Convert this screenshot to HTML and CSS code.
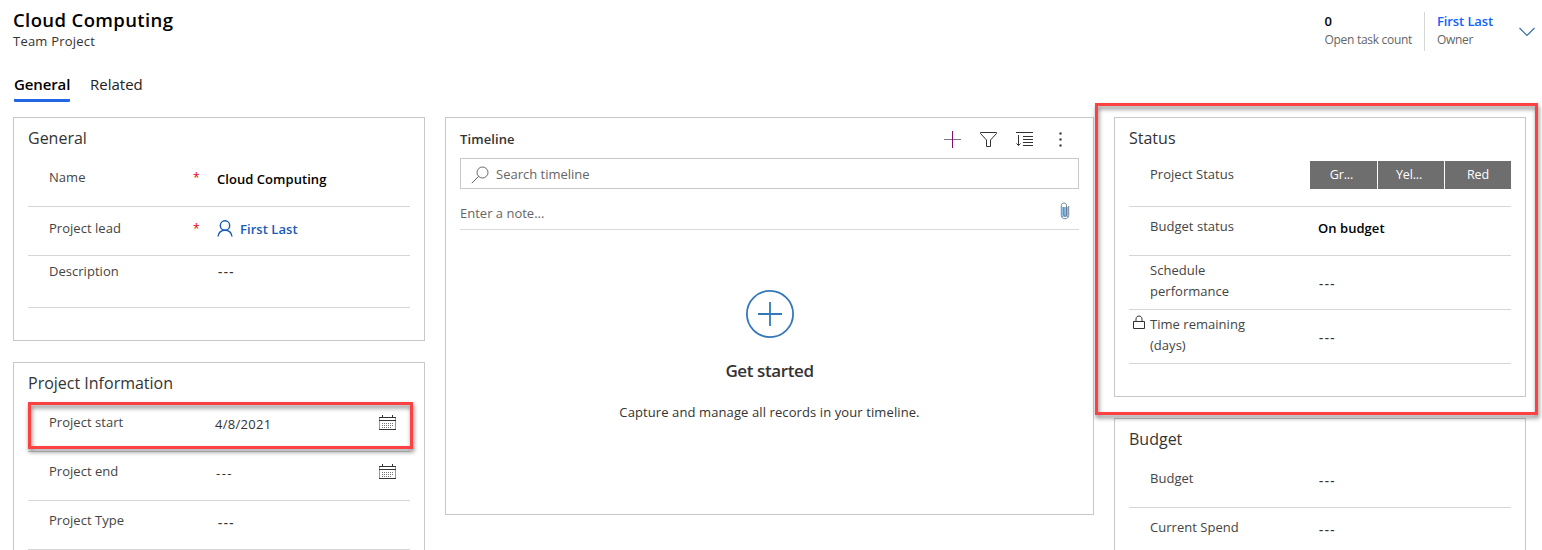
FILE: index.html
```html
<!DOCTYPE html>
<html lang="en">
<head>
<meta charset="utf-8">
<title>Cloud Computing - Team Project</title>
<link rel="stylesheet" href="styles.css">
</head>
<body>
<header class="header">
  <div class="identity">
    <h1 class="record-name"><span>Cloud Computing</span></h1>
    <div class="entity"><span>Team Project</span></div>
  </div>
  <div class="summary">
    <div class="fact"><b class="fact-value">0</b><span class="fact-label">Open task count</span></div>
    <div class="fact owner"><a class="fact-value link">First Last</a><span class="fact-label">Owner</span></div>
    <svg class="chevron" width="16" height="10" viewBox="0 0 16 10"><path d="M.5 1 8 8.500 15.500 1"/></svg>
  </div>
</header>
<nav class="tabs"><a class="tab active">General</a><a class="tab">Related</a></nav>
<main class="columns">
  <div class="column">
    <section class="panel general">
      <h2 class="title">General</h2>
      <div class="row first"><span class="label">Name</span><i class="req">*</i><b class="value">Cloud Computing</b></div>
      <div class="row lead"><span class="label">Project lead</span><i class="req">*</i><span class="value person"><svg width="16" height="17" viewBox="0 0 16 17"><circle cx="8" cy="5.500" r="4.700"/><path d="M1 16.500c.5-3.800 3.300-6.300 7-6.300s6.500 2.500 7 6.300"/></svg><b>First Last</b></span></div>
      <div class="row description"><span class="label">Description</span><b class="value dash">---</b></div>
    </section>
    <section class="panel info">
      <h2 class="title">Project Information</h2>
      <div class="row first"><span class="label">Project start</span><span class="value date">4/8/2021</span>
        <svg class="calendar" width="17" height="16" viewBox="0 0 17 16"><path d="M.5 2v12.500M16.500 2v12.500" class="cal-side"/><path d="M0 2.500h17M0 5.500h17M0 14.500h17M3.500 0v3M13.500 0v3"/><path class="cal-dots" d="M3 8.500h12M3 10.500h12M3 12.500h9"/></svg></div>
      <div class="row"><span class="label">Project end</span><span class="value date empty-date">---</span>
        <svg class="calendar" width="17" height="16" viewBox="0 0 17 16"><path d="M.5 2v12.500M16.500 2v12.500" class="cal-side"/><path d="M0 2.500h17M0 5.500h17M0 14.500h17M3.500 0v3M13.500 0v3"/><path class="cal-dots" d="M3 8.500h12M3 10.500h12M3 12.500h9"/></svg></div>
      <div class="row"><span class="label">Project Type</span><b class="value dash">---</b></div>
      <div class="callout callout-start"></div>
    </section>
  </div>
  <section class="panel timeline">
    <div class="timeline-head">
      <h2 class="timeline-title">Timeline</h2>
      <div class="tools">
        <svg width="17" height="17" viewBox="0 0 17 17"><path class="add-h" d="M0 8.500h17"/><path class="add-v" d="M8.500 0v17"/></svg>
        <svg width="17" height="17" viewBox="0 0 17 17"><path d="M.5 1.500h16v1L10.500 9v6.500h-4V9L.5 2.500z"/></svg>
        <svg width="17" height="17" viewBox="0 0 17 17"><path d="M0 1.500h17M7 5.500h10M7 8.500h10M7 11.500h10M7 14.500h10M2.500 4v10.500M.5 12.500l2 2 2-2"/></svg>
        <svg width="17" height="17" viewBox="0 0 17 17"><path class="more" d="M7.500 1.500h2v2h-2zM7.500 7.500h2v2h-2zM7.500 13.500h2v2h-2z"/></svg>
      </div>
    </div>
    <div class="search"><svg width="18" height="18" viewBox="0 0 18 18"><circle cx="11.500" cy="6.500" r="5.500"/><path d="M7.600 10.400.8 17.200"/></svg><span>Search timeline</span></div>
    <div class="note"><span>Enter a note...</span><svg width="10" height="18" viewBox="0 0 10 18"><path class="clip-fill" d="M2 5h6v10H2z"/><path d="M8.700 4v9.500c0 4.300-7.400 4.300-7.400 0V3.500c0-3.300 5.200-3.300 5.200 0V13c0 1.600-2.700 1.600-2.700 0V5"/></svg></div>
    <div class="empty">
      <svg width="48" height="48" viewBox="0 0 48 48"><circle cx="24" cy="24" r="23.100"/><path d="M12 24h24M24 12v24"/></svg>
      <h3 class="empty-title"><span>Get started</span></h3>
      <p class="empty-text"><span>Capture and manage all records in your timeline.</span></p>
    </div>
  </section>
  <div class="column right">
    <section class="panel status">
      <h2 class="title">Status</h2>
      <div class="row first"><span class="label">Project Status</span><div class="choices"><span>Gr...</span><span>Yel...</span><span>Red</span></div></div>
      <div class="row"><span class="label">Budget status</span><b class="value">On budget</b></div>
      <div class="row tall"><span class="label">Schedule<br>performance</span><b class="value dash">---</b></div>
      <div class="row tall"><svg class="lock" width="12" height="15" viewBox="0 0 12 15"><path d="M.5 6.500h11v7H.5zM3 6.500V4c0-4 6-4 6 0v2.500"/></svg><span class="label">Time remaining<br>(days)</span><b class="value dash">---</b></div>
      <div class="callout callout-status"></div>
    </section>
    <section class="panel budget">
      <h2 class="title">Budget</h2>
      <div class="row first"><span class="label">Budget</span><b class="value dash">---</b></div>
      <div class="row"><span class="label">Current Spend</span><b class="value dash">---</b></div>
    </section>
  </div>
</main>
</body>
</html>
```
FILE: styles.css
```css
* { box-sizing: border-box; }
body {
  margin: 0;
  height: 550px;
  overflow: hidden;
  background: #fff;
  color: #444;
  font: 13px/20px "Open Sans", "Noto Sans", sans-serif;
  white-space: nowrap;
}
h1, h2, h3, p { margin: 0; font-weight: 400; }
svg { display: block; fill: none; stroke: #333; stroke-width: 1; flex: none; }
b { font-weight: 600; }

.header { display: flex; justify-content: space-between; height: 70px; padding: 8px 7px 0 13px; }
.record-name { font-size: 18.500px; line-height: 24px; letter-spacing: .38px; font-weight: 550; color: #000; }
.entity { font-size: 13px; line-height: 18px; letter-spacing: .22px; font-weight: 500; color: #333; }
.summary { display: flex; }
.fact { display: flex; flex-direction: column; height: 39px; margin-top: 4px; padding-right: 12px; font-size: 12px; line-height: 19px; letter-spacing: -.3px; color: #666; }
.fact-value { font-size: 13px; line-height: 18px; font-weight: 600; letter-spacing: -.1px; color: #000; }
.fact-value.link { color: #0f62fe; }
.owner { width: 95px; border-left: 1px solid #d6d6d6; padding: 0 0 0 12px; }
.chevron { margin-top: 19px; stroke: #2f6fa8; stroke-width: 1.200; }

.tabs { display: flex; gap: 20px; height: 47px; padding-left: 14px; font-size: 15px; line-height: 28px; color: #222; }
.tab { height: 32px; }
.tab.active { width: 56px; font-weight: 600; letter-spacing: -.12px; color: #000; border-bottom: 3px solid #2266e3; border-radius: 1px; }

.columns { display: grid; grid-template-columns: 412px 649px 412px; column-gap: 20px; height: 433px; padding: 20px 0 0 13px; margin-top: -20px; height: 453px; overflow: hidden; align-items: start; }
.column { display: grid; row-gap: 21px; }
.panel { position: relative; border: 1px solid #c8c8c8; padding: 8px 14px 0; }
.general { height: 224px; }
.info, .budget { border-bottom: 0; }
.info { height: 188px; }
.status { height: 280px; }
.budget { height: 132px; }
.title { font-size: 16px; line-height: 24px; color: #333; }

.row { display: flex; position: relative; height: 49px; padding: 9px 0 0 21px; border-bottom: 1px solid #d6d6d6; }
.budget .row:last-child { height: 42px; border-bottom: 0; }
.first { height: 57px; padding-top: 17px; }
.label { width: 144px; letter-spacing: .03px; }
.value { margin: 2px 0 0 24px; letter-spacing: .05px; color: #000; }
.req { width: 8px; margin-right: -8px; font-size: 12px; font-style: normal; color: #e00; line-height: 21px; }
.dash { padding-left: 1px; color: #333; letter-spacing: 1.500px; }
.date { margin-left: 22px; color: #333; letter-spacing: .3px; }
.empty-date { padding-left: 1px; letter-spacing: 1.500px; }
.lead { padding-top: 11px; }
.person { display: flex; gap: 7px; margin-top: 1px; color: #1a5bb8; }
.person svg { stroke: #1a5bb8; stroke-width: 1.400; margin-top: 1px; }
.description { height: 52px; padding-top: 5px; }
.description .value { margin-top: 0; }
.calendar { margin: 3px 14px 0 auto; }
.calendar .cal-side { stroke: #6aa5dc; }
.calendar .cal-dots { stroke: #777; stroke-dasharray: 1 1; }

.status .first { padding-top: 14px; }
.choices { display: grid; grid-template-columns: 67px 66px 66px; gap: 1px; height: 28px; margin: -3px 0 0 16px; }
.choices span { background: #6e6e6e; color: #fff; text-align: center; line-height: 28px; font-size: 12.500px; letter-spacing: -.15px; padding-right: 4px; }
.choices span:last-child { padding-right: 0; }
.tall { height: 54px; padding-top: 4px; line-height: 21px; }
.tall .value { margin-top: 13px; }
.lock { margin: 1px 5px 0 -17px; }

.timeline { height: 398px; padding: 10px 14px 0; }
.timeline-head { display: flex; justify-content: space-between; height: 30px; line-height: 22px; }
.timeline-title { font-size: 13px; font-weight: 600; letter-spacing: .1px; color: #333; }
.tools { display: flex; gap: 19px; margin: 3px 10px 0 0; }
.tools .add-h { stroke: #8c6c8a; }
.tools .add-v { stroke: #80106e; }
.tools .more { fill: #222; stroke: none; }
.search { display: flex; gap: 7px; height: 31px; padding: 5px 10px; border: 1px solid #c8c8c8; color: #666; }
.search svg { stroke: #666; margin-top: 2px; }
.note { display: flex; justify-content: space-between; height: 41px; padding: 14px 9px 0 0; border-bottom: 1px solid #d9d9d9; color: #666; }
.note svg { stroke: #5f7487; stroke-width: .9; margin-top: -1px; }
.note .clip-fill { fill: #8cc0ee; stroke: none; }
.empty { display: flex; flex-direction: column; align-items: center; padding-top: 60px; }
.empty svg { stroke: #3578b9; stroke-width: 1.800; }
.empty-title { margin-top: 19px; font-size: 17px; line-height: 28px; font-weight: 600; letter-spacing: -.4px; color: #333; }
.empty-text { margin-top: 17px; letter-spacing: .1px; color: #333; }

.callout { position: absolute; border: 3px solid #fb4141; filter: drop-shadow(1px 3px 2px rgba(0, 0, 0, .5)); }
.callout-start { left: 14px; top: 39px; width: 385px; height: 47px; }
.callout-status { left: -20px; top: -15px; width: 443px; height: 312px; z-index: 1; }
```
